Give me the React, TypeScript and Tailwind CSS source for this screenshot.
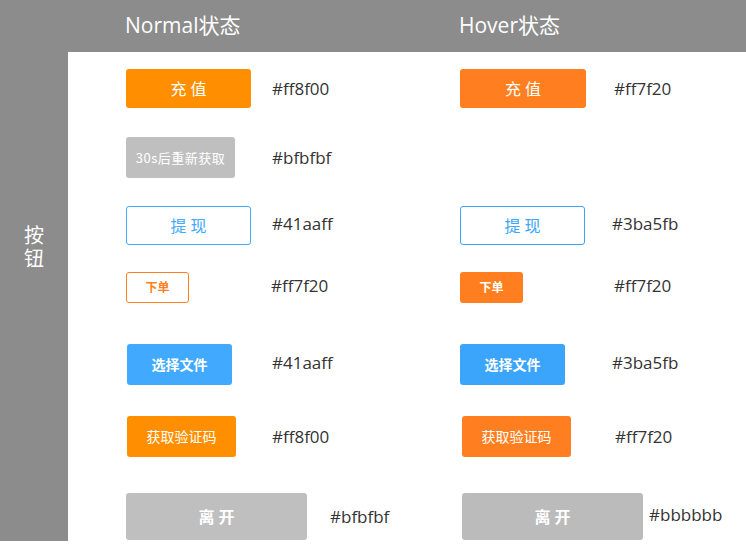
import React from "react";

const font = { fontFamily: '"Open Sans", "Noto Sans CJK SC", sans-serif' };

function Label({ children, className = "" }: { children: React.ReactNode; className?: string }) {
  return <span className={`text-[17px] text-[#333333] leading-none ${className}`}>{children}</span>;
}

export default function App() {
  return (
    <div className="w-[746px] h-[547px] bg-white overflow-hidden" style={font}>
      <div className="h-[541px] bg-[#8c8c8c] flex flex-col">
        <div className="h-[52px] flex items-center shrink-0">
          <div className="ml-[125px] w-[334px] text-white text-[21px] leading-none pb-[2px]">Normal状态</div>
          <div className="text-white text-[21px] leading-none pb-[2px]">Hover状态</div>
        </div>
        <div className="flex flex-1">
          <div className="w-[68px] shrink-0 flex flex-col items-center pt-[172px] text-white text-[20px] leading-[23px]">
            <span className="w-[20px] text-center break-all">按钮</span>
          </div>
          <div className="flex-1 bg-white pt-[17px] pl-[58px] flex flex-col">
            {/* Row 1 */}
            <div className="flex h-[39px]">
              <div className="w-[334px] flex items-center">
                <button className="w-[125px] h-[39px] rounded-[3px] bg-[#ff8f00] text-white text-[16px] tracking-[4px] pl-[4px]">充值</button>
                <Label className="ml-[21px]">#ff8f00</Label>
              </div>
              <div className="flex items-center">
                <button className="w-[126px] h-[39px] rounded-[3px] bg-[#ff7f20] text-white text-[16px] tracking-[4px] pl-[4px]">充值</button>
                <Label className="ml-[28px]">#ff7f20</Label>
              </div>
            </div>
            {/* Row 2 */}
            <div className="flex h-[41px] mt-[29px]">
              <div className="w-[334px] flex items-center">
                <button className="w-[109px] h-[41px] rounded-[3px] bg-[#bfbfbf] text-white text-[13px] tracking-[0.5px]" style={{ fontFamily: '"Noto Sans CJK SC", sans-serif' }}>30s后重新获取</button>
                <Label className="ml-[37px]">#bfbfbf</Label>
              </div>
            </div>
            {/* Row 3 */}
            <div className="flex h-[39px] mt-[28px]">
              <div className="w-[334px] flex items-center">
                <button className="w-[125px] h-[39px] rounded-[3px] border border-[#41aaff] text-[#41aaff] text-[16px] tracking-[4px] pl-[4px]">提现</button>
                <Label className="ml-[21px] -mt-[4px]">#41aaff</Label>
              </div>
              <div className="flex items-center">
                <button className="w-[125px] h-[39px] rounded-[3px] border border-[#3ba5fb] text-[#3ba5fb] text-[16px] tracking-[4px] pl-[4px]">提现</button>
                <Label className="ml-[27px] -mt-[4px]">#3ba5fb</Label>
              </div>
            </div>
            {/* Row 4 */}
            <div className="flex h-[31px] mt-[27px]">
              <div className="w-[334px] flex items-center">
                <button className="w-[63px] h-[31px] rounded-[3px] border border-[#ff7f20] text-[#ff7f20] text-[12px] font-bold">下单</button>
                <Label className="ml-[82px] -mt-[4px]">#ff7f20</Label>
              </div>
              <div className="flex items-center">
                <button className="w-[63px] h-[31px] rounded-[3px] bg-[#ff7f20] text-white text-[12px] font-bold">下单</button>
                <Label className="ml-[91px] -mt-[4px]">#ff7f20</Label>
              </div>
            </div>
            {/* Row 5 */}
            <div className="flex h-[41px] mt-[41px]">
              <div className="w-[334px] flex items-center">
                <button className="ml-[1px] w-[105px] h-[41px] rounded-[3px] bg-[#41aaff] text-white text-[14px] font-bold">选择文件</button>
                <Label className="ml-[40px] -mt-[4px]">#41aaff</Label>
              </div>
              <div className="flex items-center">
                <button className="w-[105px] h-[41px] rounded-[3px] bg-[#3ba5fb] text-white text-[14px] font-bold">选择文件</button>
                <Label className="ml-[47px] -mt-[4px]">#3ba5fb</Label>
              </div>
            </div>
            {/* Row 6 */}
            <div className="flex h-[41px] mt-[31px]">
              <div className="w-[334px] flex items-center">
                <button className="ml-[1px] w-[109px] h-[41px] rounded-[3px] bg-[#ff8f00] text-white text-[14px]">获取验证码</button>
                <Label className="ml-[36px]">#ff8f00</Label>
              </div>
              <div className="flex items-center">
                <button className="ml-[2px] w-[109px] h-[41px] rounded-[3px] bg-[#ff7f20] text-white text-[14px]">获取验证码</button>
                <Label className="ml-[44px]">#ff7f20</Label>
              </div>
            </div>
            {/* Row 7 */}
            <div className="flex h-[47px] mt-[36px]">
              <div className="w-[334px] flex items-center">
                <button className="w-[181px] h-[47px] rounded-[3px] bg-[#bfbfbf] text-white text-[16px] font-bold tracking-[4px] pl-[4px]">离开</button>
                <Label className="ml-[23px]">#bfbfbf</Label>
              </div>
              <div className="flex items-center">
                <button className="ml-[2px] w-[181px] h-[47px] rounded-[3px] bg-[#bbbbbb] text-white text-[16px] font-bold tracking-[4px] pl-[4px]">离开</button>
                <Label className="ml-[6px] -mt-[4px]">#bbbbbb</Label>
              </div>
            </div>
          </div>
        </div>
      </div>
    </div>
  );
}
